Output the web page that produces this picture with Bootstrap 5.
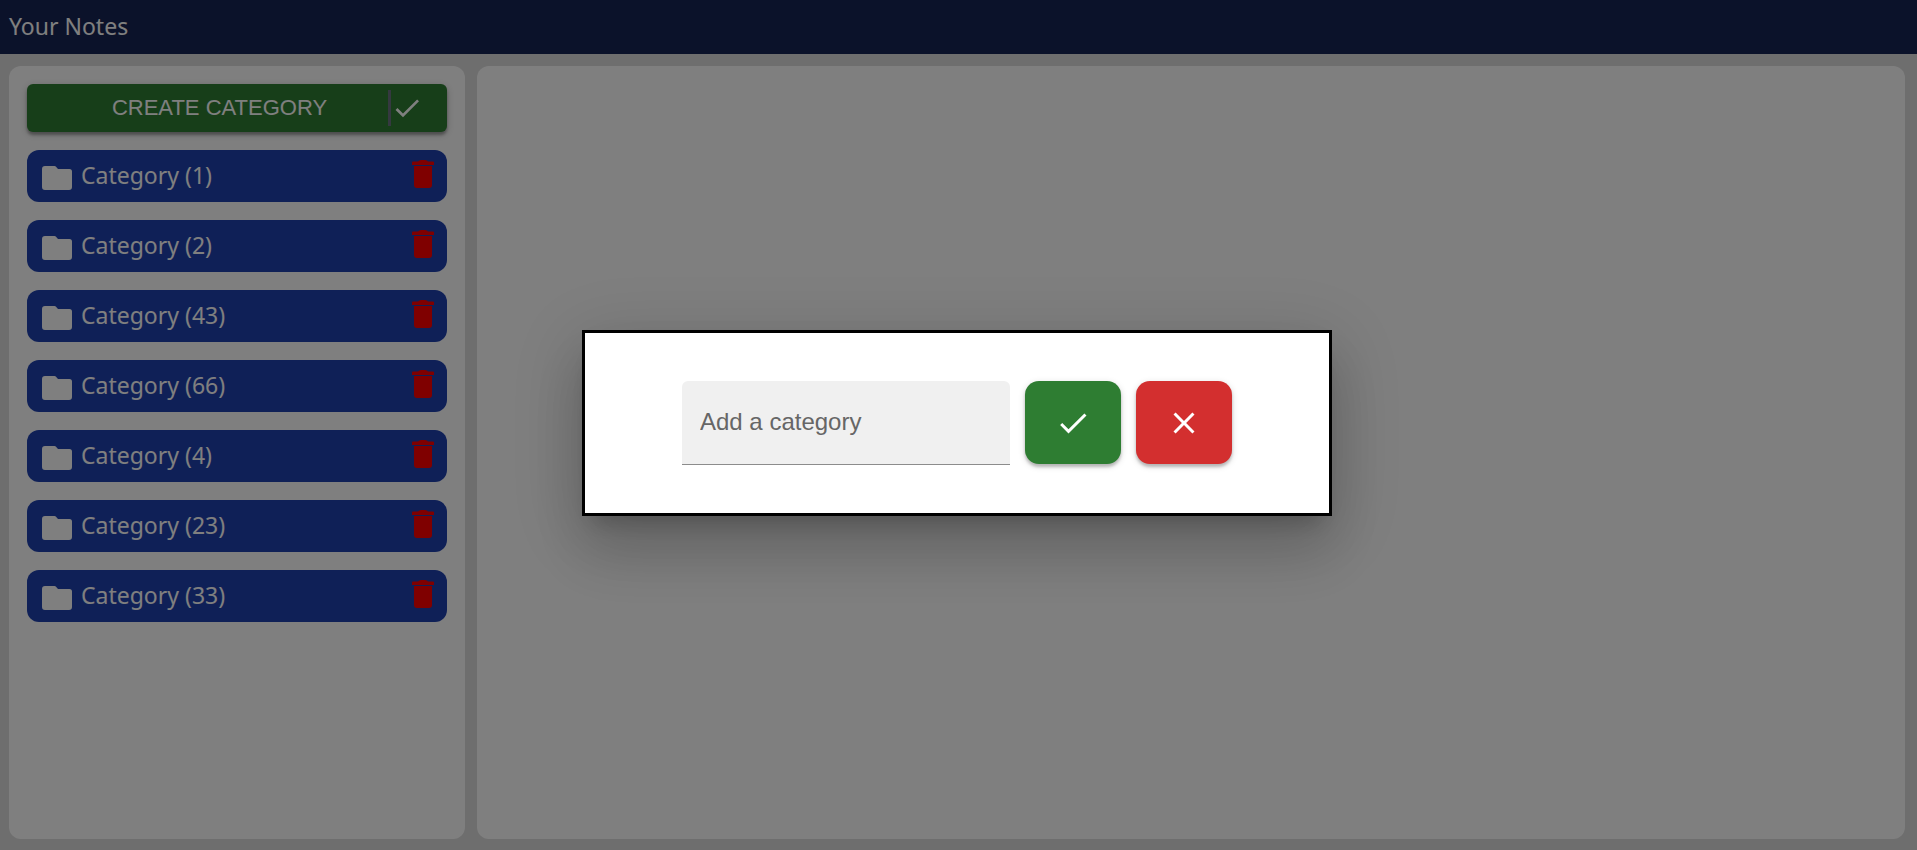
<!DOCTYPE html>
<html lang="en">
<head>
<meta charset="utf-8">
<meta name="viewport" content="width=device-width, initial-scale=1">
<title>Your Notes</title>
<link href="https://cdn.jsdelivr.net/npm/bootstrap@5.3.0/dist/css/bootstrap.min.css" rel="stylesheet">
<style>
  body { background: #ddd; font-family: "Noto Sans", "Open Sans", sans-serif; font-size: 23px; line-height: 36px; }
  .topbar { background: #172554; color: #fff; height: 54px; padding: 0 9px 3px; }
  .workspace { display: grid; grid-template-columns: 38fr 119fr; gap: 12px; padding: 12px 12px 11px 9px; }
  .panel { background: #fff; border-radius: 12px; }
  .panel-side { padding: 18px; gap: 18px; }
  .btn-create { background: #2e7d32; color: #fff; height: 48px; border-radius: 6px; padding: 6px 24px;
    font: 22px "Liberation Sans", Arial, sans-serif; box-shadow: 0 3px 3px rgba(0,0,0,.3), 0 2px 8px rgba(0,0,0,.2); }
  .btn-create:hover, .btn-create:focus { background: #2e7d32; color: #fff; }
  .btn-create .tick { border-left: 3px solid #6b7280; height: 36px; }
  .category-list { gap: 18px; }
  .category { background: #1e40af; color: #fff; height: 52px; border-radius: 12px; padding: 0 13px 0 15px; }
  .category-name { padding: 0 0 2px 9px; }
  .btn-delete, .btn-delete:hover { color: #f00; padding: 0 0 5px; }
  .shade { background: rgba(0,0,0,.5); padding: 0 3px 4px 0; }
  .dialog-box { max-width: 750px; }
  .dialog-body { background: #fff; border: 3px solid #000; border-radius: 0; padding: 48px 24px; gap: 15px;
    box-shadow: 0 16px 22px -10px rgba(0,0,0,.2), 0 36px 57px 4px rgba(0,0,0,.14), 0 14px 69px 12px rgba(0,0,0,.12); }
  .name-field { width: 328px; height: 84px; padding: 0 18px 2px; background: #f0f0f0; border: 0; border-bottom: 1px solid #8c8c8c;
    border-radius: 6px 6px 0 0; font: 24px "Liberation Sans", Arial, sans-serif; }
  .name-field::placeholder { color: #666; opacity: 1; }
  .btn-square { width: 96px; height: 83px; border: 0; border-radius: 14px; color: #fff; box-shadow: 0 3px 3px rgba(0,0,0,.2), 0 2px 7px rgba(0,0,0,.16); }
  .btn-yes { background: #2e7d32; }
  .btn-no { background: #d32f2f; }
  svg { display: block; fill: currentColor; }
</style>
</head>
<body class="min-vh-100 d-flex flex-column">
<svg class="d-none" aria-hidden="true">
  <symbol id="check" viewBox="0 0 24 24"><path d="M9 16.17 4.83 12l-1.42 1.41L9 19 21 7l-1.41-1.41z"/></symbol>
  <symbol id="close" viewBox="0 0 24 24"><path d="M19 6.41 17.59 5 12 10.59 6.41 5 5 6.41 10.59 12 5 17.59 6.41 19 12 13.41 17.59 19 19 17.59 13.41 12z"/></symbol>
  <symbol id="folder" viewBox="0 0 30 24"><path d="M3 0h9.500q1 0 1.500.700L16 3h11.500A2.500 2.500 0 0 1 30 5.500V21a3 3 0 0 1-3 3H3a3 3 0 0 1-3-3V3a3 3 0 0 1 3-3z"/></symbol>
  <symbol id="trash" viewBox="0 0 22 28"><path d="M1 1.500h5Q7 0 9 0h4q2 0 3 1.500h5a1 1 0 0 1 1 1V5H0V2.500a1 1 0 0 1 1-1zM2 6h18v19a3 3 0 0 1-3 3H5a3 3 0 0 1-3-3z"/></symbol>
</svg>

<nav class="topbar d-flex align-items-center">Your Notes</nav>

<main class="workspace flex-grow-1">
  <aside class="panel panel-side d-flex flex-column">
    <button type="button" class="btn btn-create border-0 d-flex align-items-center">
      <span class="flex-grow-1 text-center">CREATE CATEGORY</span>
      <span class="tick d-flex align-items-center"><svg width="32" height="32"><use href="#check"/></svg></span>
    </button>
    <ul class="category-list list-unstyled d-grid mb-0" id="categories"></ul>
  </aside>
  <section class="panel"></section>
</main>

<div class="modal shade d-block" role="dialog" aria-modal="true" aria-label="Create category">
  <div class="modal-dialog modal-dialog-centered dialog-box">
    <form class="modal-content dialog-body flex-row justify-content-center">
      <input class="name-field" type="text" placeholder="Add a category" aria-label="Add a category">
      <button type="button" class="btn-square btn-yes d-flex align-items-center justify-content-center" aria-label="Add"><svg width="36" height="36"><use href="#check"/></svg></button>
      <button type="button" class="btn-square btn-no d-flex align-items-center justify-content-center" aria-label="Cancel"><svg width="36" height="36"><use href="#close"/></svg></button>
    </form>
  </div>
</div>

<script src="https://cdn.jsdelivr.net/npm/bootstrap@5.3.0/dist/js/bootstrap.bundle.min.js"></script>
<script>
  document.getElementById('categories').innerHTML = [1, 2, 43, 66, 4, 23, 33].map(n => `
    <li class="category d-flex align-items-center">
      <svg class="mt-1" width="30" height="24"><use href="#folder"/></svg>
      <span class="category-name flex-grow-1">Category (${n})</span>
      <button type="button" class="btn btn-delete border-0" aria-label="Delete category ${n}"><svg width="22" height="28"><use href="#trash"/></svg></button>
    </li>`).join('');
</script>
</body>
</html>
